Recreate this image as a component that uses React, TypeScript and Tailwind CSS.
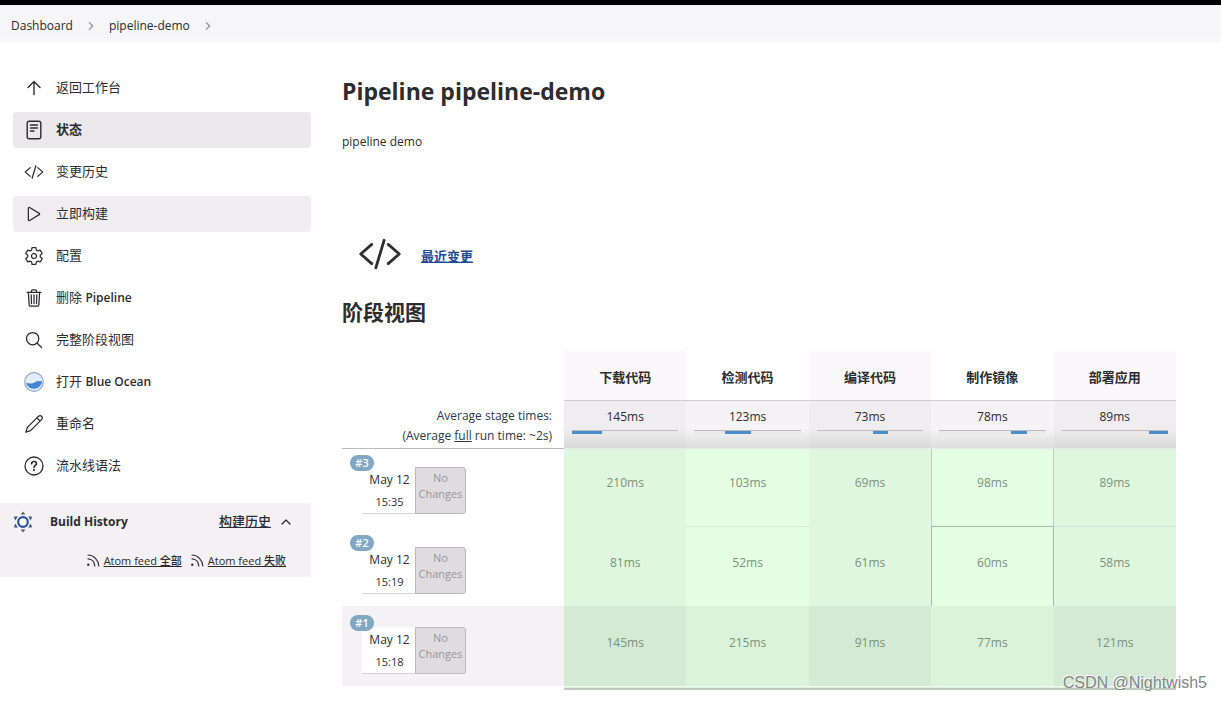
import type { ComponentType, ReactNode } from "react";
import {
  IoChevronForward,
  IoChevronUp,
  IoCodeSlashOutline,
  IoPlayOutline,
  IoSearchOutline,
  IoSettingsOutline,
  IoTrashOutline,
} from "react-icons/io5";

type IconType = ComponentType<{ className?: string }>;

function LineIcon({ className, children }: { className?: string; children: ReactNode }) {
  return (
    <svg
      viewBox="0 0 20 20"
      className={className}
      fill="none"
      stroke="currentColor"
      strokeWidth="1.4"
      strokeLinecap="round"
      strokeLinejoin="round"
      aria-hidden="true"
    >
      {children}
    </svg>
  );
}

function ArrowUpIcon({ className }: { className?: string }) {
  return (
    <LineIcon className={className}>
      <path d="M10 16.500V3.500M4 9.500l6-6 6 6" />
    </LineIcon>
  );
}

function ReaderIcon({ className }: { className?: string }) {
  return (
    <LineIcon className={className}>
      <rect x="3.200" y="1.200" width="13.600" height="17.600" rx="2" />
      <path d="M6.500 5h7M6.500 8h7M6.500 11h3.500" />
    </LineIcon>
  );
}

function PencilIcon({ className }: { className?: string }) {
  return (
    <LineIcon className={className}>
      <path d="M1.800 18.200 3.400 13.400 14.300 2.400c1.100-1 2.500-.9 3.300-.1s.9 2.200-.1 3.300L6.600 16.600ZM12.900 3.900l3.200 3.200" strokeWidth="1.300" />
    </LineIcon>
  );
}

function HelpIcon({ className }: { className?: string }) {
  return (
    <LineIcon className={className}>
      <circle cx="10" cy="10" r="9" strokeWidth="1.300" />
      <path d="M7.600 7.700c.1-1.500 1.200-2.200 2.400-2.200 1.400 0 2.500.8 2.500 2.100 0 1.700-2.500 1.900-2.500 3.900" strokeWidth="1.700" />
      <circle cx="10" cy="14" r="1.100" fill="currentColor" stroke="none" />
    </LineIcon>
  );
}

function BlueOceanIcon({ className }: { className?: string }) {
  return (
    <svg viewBox="0 0 20 20" className={className} aria-hidden="true">
      <circle cx="10" cy="10" r="9.300" fill="#e3eefa" stroke="#8fa6cc" strokeWidth="1.200" />
      <path
        d="M2 10.800c2 .6 4.400.9 6.500.5 2.500-.5 3.300-2 5-2.300 1.600-.2 2.600.6 4.600.1A8.200 8.200 0 0 1 2 10.800Z"
        fill="#4384d6"
      />
    </svg>
  );
}

function BuildHistoryIcon() {
  return (
    <svg viewBox="0 0 22 22" className="size-[22px] shrink-0" aria-hidden="true">
      <circle cx="11" cy="11" r="4.800" fill="#fff" stroke="#2a52a0" strokeWidth="2.200" />
      {[0, 60, 120, 180, 240, 300].map((angle) => (
        <path
          key={angle}
          d="M11 .4 13.400 3.600H8.600Z"
          fill={angle % 180 === 0 ? "#55606e" : "#35588f"}
          transform={`rotate(${angle} 11 11)`}
        />
      ))}
    </svg>
  );
}

function FeedIcon() {
  return (
    <svg viewBox="0 0 14 14" className="size-[14px]" fill="none" stroke="#333" strokeWidth="1.200" strokeLinecap="round" aria-hidden="true">
      <path d="M2 1C8 1.200 12.500 6 12.800 12" />
      <path d="M2 4.800c3.800.2 6.600 3.200 6.800 7.200" />
      <circle cx="2.300" cy="10.800" r="1.200" fill="#333" stroke="none" />
    </svg>
  );
}

const tasks: { icon: IconType; label: ReactNode; row?: string }[] = [
  { icon: ArrowUpIcon, label: "返回工作台" },
  { icon: ReaderIcon, label: "状态", row: "bg-[#ebe9eb] font-bold" },
  { icon: IoCodeSlashOutline, label: "变更历史" },
  { icon: IoPlayOutline, label: "立即构建", row: "bg-[#efedef]" },
  { icon: IoSettingsOutline, label: "配置" },
  { icon: IoTrashOutline, label: <>删除 <span className="text-xs font-semibold">Pipeline</span></> },
  { icon: IoSearchOutline, label: "完整阶段视图" },
  { icon: BlueOceanIcon, label: <>打开 <span className="text-xs font-semibold">Blue Ocean</span></> },
  { icon: PencilIcon, label: "重命名" },
  { icon: HelpIcon, label: "流水线语法" },
];

const stages = [
  { name: "下载代码", ms: 145 },
  { name: "检测代码", ms: 123 },
  { name: "编译代码", ms: 73 },
  { name: "制作镜像", ms: 78 },
  { name: "部署应用", ms: 89 },
];
const totalMs = stages.reduce((sum, stage) => sum + stage.ms, 0);

const runs = [
  { id: "#3", time: "15:35", ms: [210, 103, 69, 98, 89] },
  { id: "#2", time: "15:19", ms: [81, 52, 61, 60, 58] },
  { id: "#1", time: "15:18", ms: [145, 215, 91, 77, 121] },
];

function cellColor(run: number, stage: number) {
  if (run === 2) return stage % 2 === 0 ? "bg-[#d4ead4]" : "bg-[#daf3da]";
  return stage % 2 === 0 ? "bg-[#dff7df]" : "bg-[#e5ffe5]";
}

function cellBorder(run: number, stage: number) {
  if (stage === 3 && run === 0) return "border-x border-[#b9d3b9]";
  if (stage === 3 && run === 1) return "border-x border-t border-[#a3bca3]";
  if (stage === 1 && run === 1) return "border-t border-[#d3ecd3]";
  if (stage === 4 && run === 1) return "border-t border-[#cfe6d4]";
  return "";
}

function Sidebar() {
  return (
    <aside className="w-[311px] shrink-0">
      <nav className="flex flex-col gap-1.5 pt-[27px] pl-[13px]">
        {tasks.map(({ icon: Icon, label, row = "" }, i) => (
          <a key={i} href="#" className={`flex h-9 items-center gap-3 rounded-sm px-[11px] text-[13px] ${row}`}>
            <Icon className="size-5 shrink-0" />
            <span>{label}</span>
          </a>
        ))}
      </nav>
      <section className="mt-[19px] h-[74px] bg-[#f3f1f3] pr-[18px] pl-3">
        <div className="flex h-[38px] items-center">
          <BuildHistoryIcon />
          <h2 className="ml-4 flex-1 text-xs font-bold">Build History</h2>
          <a href="#" className="text-[13px] font-medium underline">构建历史</a>
          <button type="button" aria-label="收起" className="ml-2">
            <IoChevronUp className="size-3.5" />
          </button>
        </div>
        <div className="flex h-10 items-center justify-end gap-2 pr-[7px]">
          {["Atom feed 全部", "Atom feed 失败"].map((label) => (
            <a key={label} href="#" className="flex items-center gap-1">
              <FeedIcon />
              <span className="text-[11px] font-medium whitespace-nowrap underline">{label}</span>
            </a>
          ))}
        </div>
      </section>
    </aside>
  );
}

function StageTable() {
  return (
    <table className="w-full table-fixed border-separate border-spacing-0">
      <colgroup>
        <col className="w-[222px]" />
        {stages.map((stage) => (
          <col key={stage.name} />
        ))}
      </colgroup>
      <thead>
        <tr className="h-[50px]">
          <td />
          {stages.map((stage, i) => (
            <th
              key={stage.name}
              scope="col"
              className={`border-b border-[#cfcdcf] pt-1 text-[13px] font-bold ${i % 2 === 0 ? "bg-[#faf8fa]" : "bg-white"}`}
            >
              {stage.name}
            </th>
          ))}
        </tr>
        <tr className="h-12">
          <td className="border-b border-[#bbb] pt-1 pr-3 pb-0.5 text-right text-xs leading-5 text-[#2b3a4a]">
            Average stage times:
            <br />
            (Average <span className="underline">full</span> run time: ~2s)
          </td>
          {stages.map((stage, i) => {
            const before = stages.slice(0, i).reduce((sum, s) => sum + s.ms, 0);
            return (
              <td
                key={stage.name}
                className={`border-b border-[#e6e8e6] bg-linear-to-b px-2 pt-1.5 text-center align-top text-xs ${i % 2 === 0 ? "from-[#efedef] from-60% to-[#d9d9d9]" : "from-[#f5f3f5] from-60% to-[#dedede]"}`}
              >
                <div className="leading-5">{stage.ms}ms</div>
                <div className="mt-[3px] h-1 border-t border-[#bdbdbd] bg-[#e9e9e9]">
                  <div
                    className="h-[3px] bg-[#4a8fcb]"
                    style={{ width: `${(stage.ms / totalMs) * 100}%`, marginLeft: `${(before / totalMs) * 100}%` }}
                  />
                </div>
              </td>
            );
          })}
        </tr>
      </thead>
      <tbody>
        {runs.map((run, r) => (
          <tr key={run.id} className={r === 0 ? "h-[77px]" : "h-20"}>
            <td className={`pb-3 pl-5 align-bottom ${r === 2 ? "bg-[#f4f2f4]" : ""}`}>
              <div className="relative flex h-[47px] w-[104px] text-xs">
                <a
                  href="#"
                  className="absolute -top-3 -left-3 flex h-4 w-6 items-center justify-center rounded-full bg-[#82a7c2] text-[11px] font-semibold text-white"
                >
                  {run.id}
                </a>
                <div className="flex w-[53px] flex-col items-center border-b border-[#d5d3d5] bg-white pt-0.5 pl-0.5 leading-[22px]">
                  <span>May 12</span>
                  <span className="text-[11px]">{run.time}</span>
                </div>
                <div className="flex-1 rounded-r-[3px] border border-[#bcb9bc] bg-[#dfdcdf] pt-0.5 text-center text-[11px] leading-4 text-[#989598]">
                  No
                  <br />
                  Changes
                </div>
              </div>
            </td>
            {run.ms.map((ms, s) => (
              <td
                key={s}
                className={`pb-[33px] text-center align-bottom text-xs leading-5 text-[#7b927b] ${cellColor(r, s)} ${cellBorder(r, s)}`}
              >
                {ms}ms
              </td>
            ))}
          </tr>
        ))}
        <tr className="h-1">
          <td />
          <td colSpan={5} className="border-t border-b-2 border-t-[#f3fff3] border-b-[#bccdbc] bg-[#dcf3dc]" />
        </tr>
      </tbody>
    </table>
  );
}

export default function App() {
  return (
    <div className="relative min-h-screen bg-white font-['Open_Sans','Noto_Sans_CJK_SC',sans-serif] text-[#2d2d30]">
      <header className="border-t-[5px] border-black">
        <nav
          aria-label="Breadcrumb"
          className="flex h-[38px] items-center bg-linear-to-b from-[#f6f5f7] from-85% to-[#fcfbfc] pt-1 pl-[11px] text-xs font-medium"
        >
          <a href="#">Dashboard</a>
          <IoChevronForward className="mx-3 size-3 text-[#8b8b90]" />
          <a href="#">pipeline-demo</a>
          <IoChevronForward className="mx-3 size-3 text-[#8b8b90]" />
        </nav>
      </header>
      <div className="flex">
        <Sidebar />
        <main className="min-w-0 flex-1 pr-[45px] pl-[31px]">
          <h1 className="mt-8 text-[23px] leading-8 font-bold">Pipeline pipeline-demo</h1>
          <p className="mt-[25px] text-xs leading-5">pipeline demo</p>
          <div className="mt-20 flex h-11 items-center gap-[19px] pl-4">
            <IoCodeSlashOutline className="size-11" />
            <a href="#" className="pt-1.5 text-[13px] font-bold text-[#1f4b96] underline">最近变更</a>
          </div>
          <h2 className="mt-5 mb-[23px] text-[21px] leading-8 font-bold">阶段视图</h2>
          <StageTable />
        </main>
      </div>
      <div className="pointer-events-none absolute right-3.5 bottom-1.5 font-['Liberation_Sans',sans-serif] text-base text-[#858585] [text-shadow:-1px_-1px_0_#fff]">
        CSDN @Nightwish5
      </div>
    </div>
  );
}
